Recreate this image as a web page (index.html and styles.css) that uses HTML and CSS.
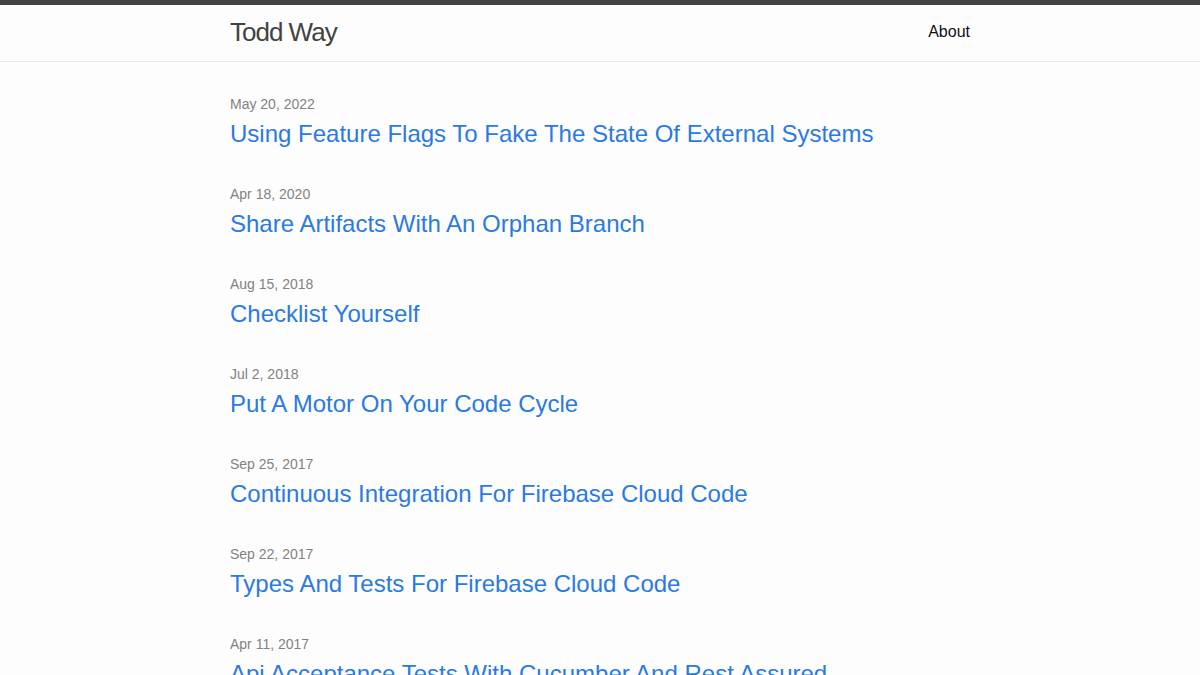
FILE: index.html
```html
<!DOCTYPE html>
<html lang="en">
<head>
<meta charset="utf-8">
<title>Todd Way</title>
<link rel="stylesheet" href="styles.css">
</head>
<body>
<header class="site-header">
  <div class="wrapper header-row">
    <a class="site-title" href="#">Todd Way</a>
    <nav class="site-nav">
      <a class="page-link" href="#">About</a>
    </nav>
  </div>
</header>
<main class="page-content">
  <div class="wrapper">
    <ul class="post-list">
      <li>
        <span class="post-meta">May 20, 2022</span>
        <h3><a class="post-link" href="#">Using Feature Flags To Fake The State Of External Systems</a></h3>
      </li>
      <li>
        <span class="post-meta">Apr 18, 2020</span>
        <h3><a class="post-link" href="#">Share Artifacts With An Orphan Branch</a></h3>
      </li>
      <li>
        <span class="post-meta">Aug 15, 2018</span>
        <h3><a class="post-link" href="#">Checklist Yourself</a></h3>
      </li>
      <li>
        <span class="post-meta">Jul 2, 2018</span>
        <h3><a class="post-link" href="#">Put A Motor On Your Code Cycle</a></h3>
      </li>
      <li>
        <span class="post-meta">Sep 25, 2017</span>
        <h3><a class="post-link" href="#">Continuous Integration For Firebase Cloud Code</a></h3>
      </li>
      <li>
        <span class="post-meta">Sep 22, 2017</span>
        <h3><a class="post-link" href="#">Types And Tests For Firebase Cloud Code</a></h3>
      </li>
      <li>
        <span class="post-meta">Apr 11, 2017</span>
        <h3><a class="post-link" href="#">Api Acceptance Tests With Cucumber And Rest Assured</a></h3>
      </li>
    </ul>
  </div>
</main>
</body>
</html>
```
FILE: styles.css
```css
html, body {
  margin: 0;
  padding: 0;
}

body {
  font: 400 16px/1.5 "Liberation Sans", Arial, sans-serif;
  color: #111111;
  background-color: #fdfdfd;
}

a {
  text-decoration: none;
}

.wrapper {
  max-width: 740px;
  margin: 0 auto;
  padding: 0 30px;
}

/* Header */
.site-header {
  border-top: 5px solid #424242;
  border-bottom: 1px solid #e8e8e8;
  min-height: 56px;
}

.header-row {
  display: flex;
  justify-content: space-between;
  align-items: center;
}

.site-title {
  font-size: 26px;
  font-weight: 300;
  line-height: 54px;
  letter-spacing: -1px;
  color: #424242;
}

.site-nav {
  line-height: 54px;
}

.page-link {
  color: #111111;
}

/* Post list */
.page-content {
  padding: 32px 0;
}

.post-list {
  list-style: none;
  margin: 0;
  padding: 0;
}

.post-list li {
  margin-bottom: 32px;
}

.post-meta {
  display: block;
  font-size: 14px;
  line-height: 21px;
  color: #828282;
}

.post-list h3 {
  margin: 0;
  font-size: 24px;
  font-weight: 400;
  line-height: 37px;
}

.post-link {
  display: block;
  color: #2a7ae2;
}
```
